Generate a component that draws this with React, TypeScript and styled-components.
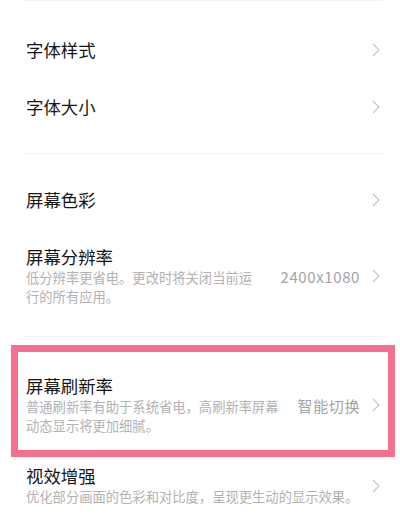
import styled, { createGlobalStyle } from "styled-components";

const GlobalStyle = createGlobalStyle`
  body {
    margin: 0;
    background: #ffffff;
    font-family: "Noto Sans CJK SC", "Noto Sans", sans-serif;
  }
`;

type Item = {
  title: string;
  desc?: string;
  value?: string;
};

const Chevron = () => (
  <svg width="8" height="14" viewBox="0 0 8 14" fill="none">
    <path d="M1 1l6 6-6 6" stroke="#c6c6c6" strokeWidth="1.2" />
  </svg>
);

const SettingRow = ({ item }: { item: Item }) => (
  <Row $withDesc={!!item.desc}>
    <TextCol>
      <Title>{item.title}</Title>
      {item.desc && <Desc>{item.desc}</Desc>}
    </TextCol>
    {item.value && <Value>{item.value}</Value>}
    <ChevronBox>
      <Chevron />
    </ChevronBox>
  </Row>
);

export default function App() {
  return (
    <>
      <GlobalStyle />
      <Page>
        <Divider />
        <Group $top={20} $bottom={18}>
          <SettingRow item={{ title: "字体样式" }} />
          <SettingRow item={{ title: "字体大小" }} />
        </Group>
        <Divider />
        <Group $top={17} $bottom={12}>
          <SettingRow item={{ title: "屏幕色彩" }} />
          <SettingRow
            item={{
              title: "屏幕分辨率",
              desc: "低分辨率更省电。更改时将关闭当前运行的所有应用。",
              value: "2400x1080",
            }}
          />
        </Group>
        <Divider />
        <Highlight>
          <SettingRow
            item={{
              title: "屏幕刷新率",
              desc: "普通刷新率有助于系统省电，高刷新率屏幕动态显示将更加细腻。",
              value: "智能切换",
            }}
          />
        </Highlight>
        <LastRow>
          <SettingRow
            item={{
              title: "视效增强",
              desc: "优化部分画面的色彩和对比度，呈现更生动的显示效果。",
            }}
          />
        </LastRow>
      </Page>
    </>
  );
}

const Page = styled.div`
  width: 400px;
  height: 522px;
  overflow: hidden;
  box-sizing: border-box;
  padding: 0 20px 0 26px;
`;

const Divider = styled.div`
  height: 1px;
  background: #f1f1f1;
  margin: 0 -3px;
`;

const Group = styled.div<{ $top: number; $bottom: number }>`
  display: flex;
  flex-direction: column;
  padding: ${({ $top, $bottom }) => `${$top}px 0 ${$bottom}px`};
`;

const Row = styled.div<{ $withDesc: boolean }>`
  display: flex;
  align-items: center;
  min-height: ${({ $withDesc }) => ($withDesc ? "0" : "57px")};
  box-sizing: border-box;
  padding: ${({ $withDesc }) => ($withDesc ? "18px 0" : "0")};
`;

const TextCol = styled.div`
  flex: 1;
  min-width: 0;
  display: flex;
  flex-direction: column;
`;

const Title = styled.div`
  font-size: 17.4px;
  line-height: 22px;
  color: #161616;
`;

const Desc = styled.div`
  font-size: 13.3px;
  line-height: 19px;
  color: #b2b2b2;
`;

const Value = styled.div`
  font-size: 15px;
  letter-spacing: 0.6px;
  color: #a3a3a3;
  padding-left: 17px;
  white-space: nowrap;
`;

const ChevronBox = styled.div`
  display: flex;
  align-items: center;
  margin-left: 12px;
  width: 8px;
`;

const Highlight = styled.div`
  margin: 8px -15px 0 -15px;
  border: 7px solid #f4708f;
  padding: 0 8px;

  ${Row} {
    padding: 23px 0 15px;
  }
`;

const LastRow = styled.div`
  ${Row} {
    padding: 8px 0 0;
  }
`;
